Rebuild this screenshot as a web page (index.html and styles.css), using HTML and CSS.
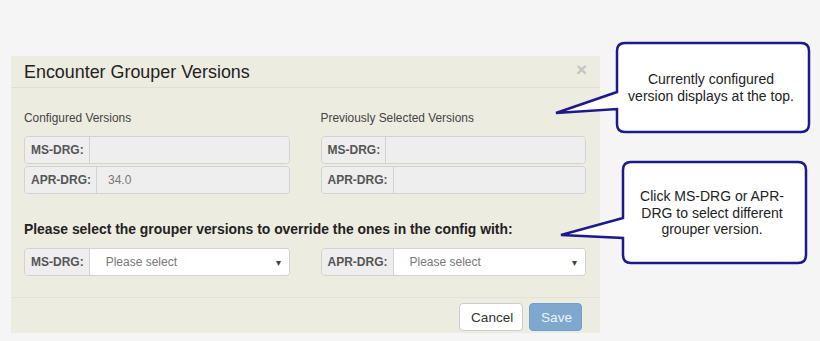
FILE: index.html
```html
<!DOCTYPE html>
<html>
<head>
<meta charset="utf-8">
<link rel="stylesheet" href="styles.css">
</head>
<body>
<div class="page">
  <div class="modal">
    <div class="modal-header">
      <h4 class="modal-title">Encounter Grouper Versions</h4>
      <span class="close">&times;</span>
    </div>
    <div class="modal-body">
      <div class="columns">
        <div class="col">
          <div class="col-label">Configured Versions</div>
          <div class="input-group">
            <span class="addon">MS-DRG:</span>
            <span class="field readonly"></span>
          </div>
          <div class="input-group">
            <span class="addon">APR-DRG:</span>
            <span class="field readonly">34.0</span>
          </div>
        </div>
        <div class="col">
          <div class="col-label">Previously Selected Versions</div>
          <div class="input-group">
            <span class="addon">MS-DRG:</span>
            <span class="field readonly"></span>
          </div>
          <div class="input-group">
            <span class="addon">APR-DRG:</span>
            <span class="field readonly"></span>
          </div>
        </div>
      </div>
      <h5 class="override-title">Please select the grouper versions to override the ones in the config with:</h5>
      <div class="columns">
        <div class="col">
          <div class="input-group">
            <span class="addon">MS-DRG:</span>
            <span class="field select"><span class="placeholder">Please select</span><span class="caret">&#9662;</span></span>
          </div>
        </div>
        <div class="col">
          <div class="input-group">
            <span class="addon">APR-DRG:</span>
            <span class="field select"><span class="placeholder">Please select</span><span class="caret">&#9662;</span></span>
          </div>
        </div>
      </div>
    </div>
    <div class="modal-footer">
      <button class="btn btn-default">Cancel</button>
      <button class="btn btn-primary" disabled>Save</button>
    </div>
  </div>

  <svg class="callouts" width="820" height="341" viewBox="0 0 820 341">
    <path d="M 625 43 H 801 Q 809 43 809 51 V 124 Q 809 132 801 132 H 625 Q 617 132 617 124 V 109 L 556 113 L 617 92 V 51 Q 617 43 625 43 Z" />
    <path d="M 631 162 H 798 Q 806 162 806 170 V 255 Q 806 263 798 263 H 631 Q 623 263 623 255 V 238 L 561 235 L 623 218 V 170 Q 623 162 631 162 Z" />
  </svg>
  <div class="callout-text callout-1">Currently configured<br>version displays at the top.</div>
  <div class="callout-text callout-2">Click MS-DRG or APR-<br>DRG to select different<br>grouper version.</div>
</div>
</body>
</html>
```

FILE: styles.css
```css
html, body {
  margin: 0;
  padding: 0;
  background: #f5f5f5;
  font-family: "Liberation Sans", Arial, sans-serif;
}

.page {
  position: relative;
  width: 820px;
  height: 341px;
  overflow: hidden;
  padding: 56px 0 0 11px;
  box-sizing: border-box;
}

.modal {
  width: 589px;
  background: #edece1;
}

.modal-header {
  height: 32px;
  box-sizing: border-box;
  border-bottom: 1px solid #e0dfd3;
  display: flex;
  align-items: center;
  justify-content: space-between;
  padding: 2px 13px 0 13px;
}

.modal-title {
  margin: 0;
  font-size: 17.9px;
  font-weight: normal;
  color: #222;
}

.close {
  font-size: 19px;
  font-weight: bold;
  color: #c4c4c0;
  line-height: 1;
  margin-top: -7px;
}

.modal-body {
  padding: 23px 14px 21px 13px;
  border-bottom: 1px solid #e3e2d7;
}

.columns {
  display: flex;
  gap: 31px;
}

.col {
  width: 266px;
  display: flex;
  flex-direction: column;
  gap: 2px;
}

.col-label {
  font-size: 11.9px;
  line-height: 14px;
  color: #444;
  margin-bottom: 9px;
}

.input-group {
  display: flex;
  height: 28px;
  box-sizing: border-box;
  border: 1px solid #d2d2d0;
  border-radius: 4px;
  overflow: hidden;
}

.addon {
  display: flex;
  align-items: center;
  padding: 0 5px 0 6px;
  background: #eeeeee;
  border-right: 1px solid #d2d2d0;
  font-size: 12px;
  font-weight: bold;
  color: #555;
}

.field {
  flex: 1;
  display: flex;
  align-items: center;
  font-size: 12px;
  color: #777;
}

.field.readonly {
  background: #eeeeee;
  padding: 0 11px;
}

.field.select {
  background: #fff;
  padding: 0 8px 0 16px;
  justify-content: space-between;
}

.placeholder {
  color: #777;
}

.caret {
  font-size: 10px;
  color: #444;
}

.override-title {
  margin: 27px 0 11px;
  font-size: 13.9px;
  line-height: 16px;
  font-weight: bold;
  color: #222;
}

.modal-footer {
  display: flex;
  justify-content: flex-end;
  gap: 6px;
  padding: 5px 18px 2px 0;
}

.btn {
  height: 28px;
  box-sizing: border-box;
  border-radius: 4px;
  font-family: "Liberation Sans", Arial, sans-serif;
  font-size: 13.6px;
  padding: 0 11px;
  border: 1px solid #ccc;
}

.btn-default {
  background: #fff;
  color: #333;
  width: 64px;
}

.btn-primary {
  background: #7ea8cd;
  border-color: #73a0c8;
  color: #eef3f8;
  width: 53px;
}

.callouts {
  position: absolute;
  left: 0;
  top: 0;
}

.callouts path {
  fill: #fff;
  stroke: #1c1a8a;
  stroke-width: 2.5;
  stroke-linejoin: miter;
}

.callout-text {
  position: absolute;
  font-size: 14px;
  color: #222;
  text-align: center;
}

.callout-1 {
  left: 614px;
  width: 194px;
  top: 71px;
  line-height: 17px;
}

.callout-2 {
  left: 621px;
  width: 182px;
  top: 188px;
  line-height: 16.5px;
}
```
